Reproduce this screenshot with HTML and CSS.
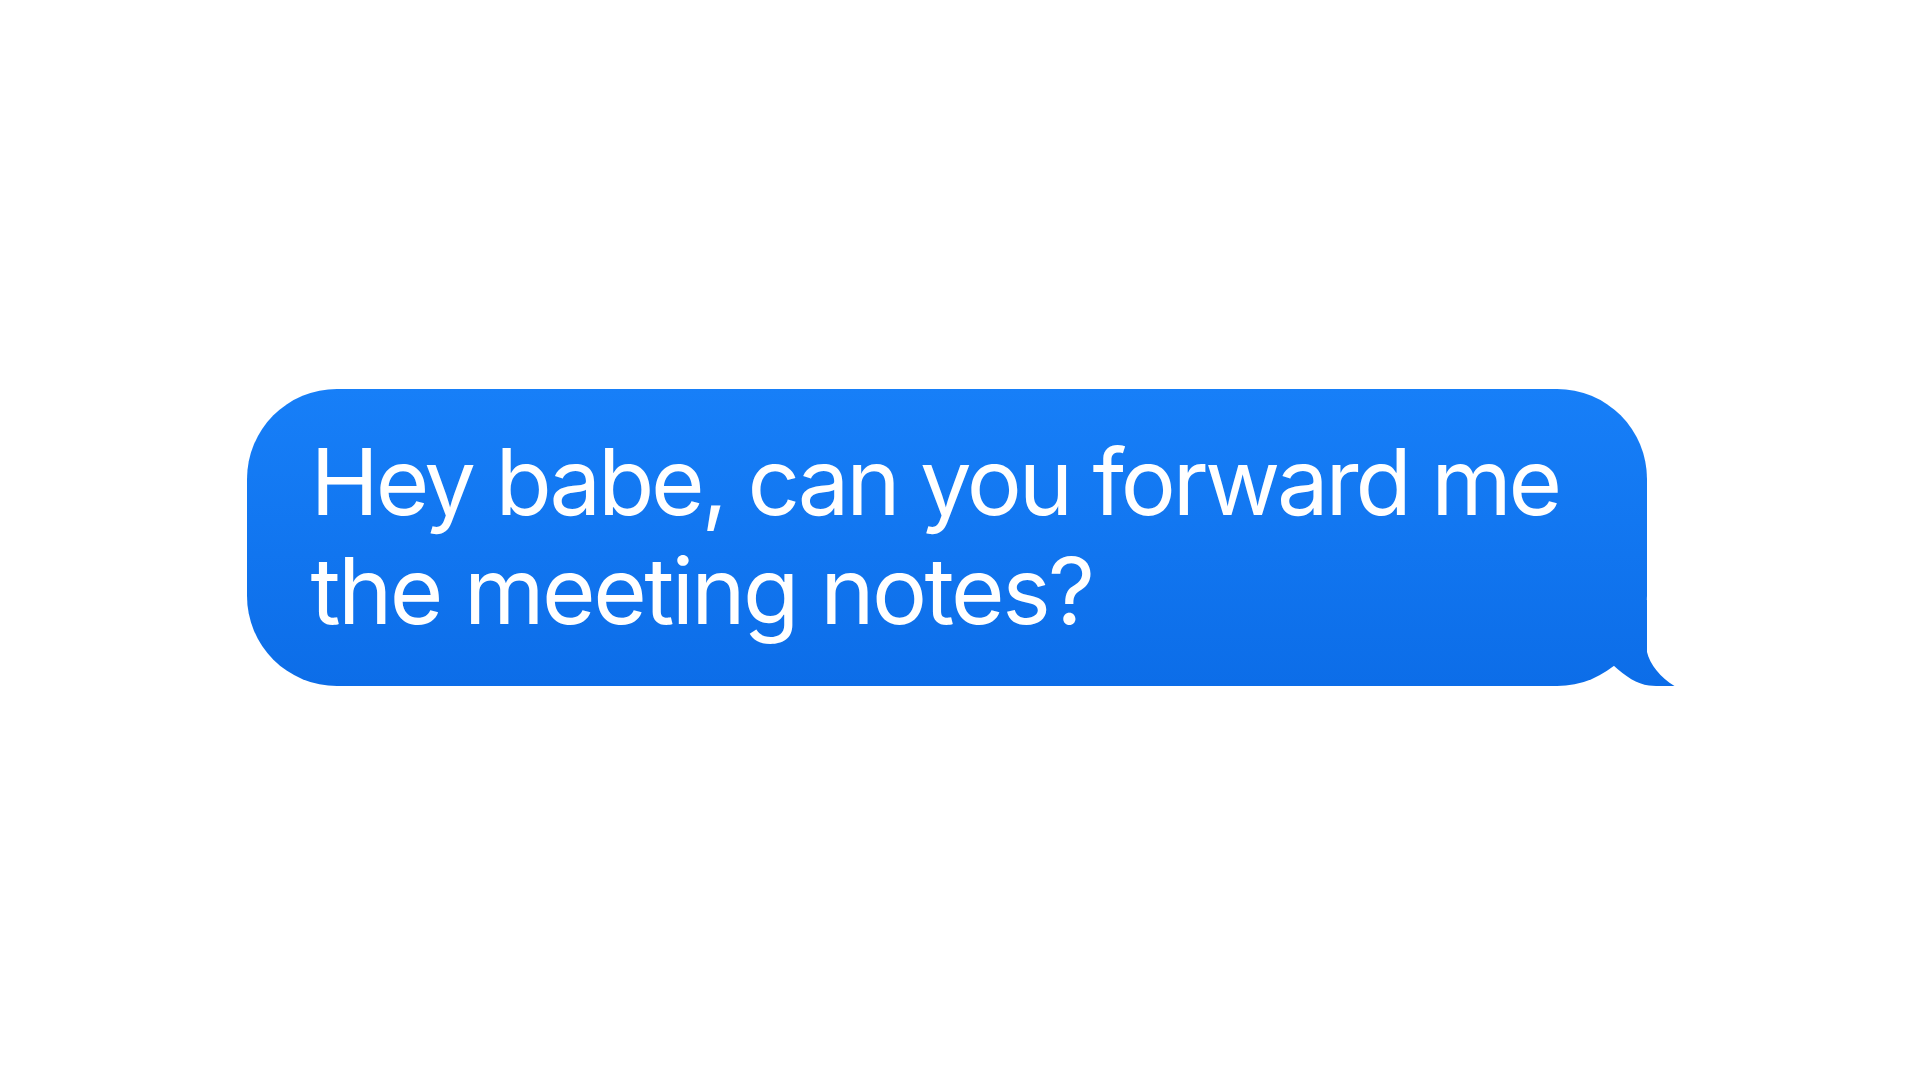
FILE: index.html
```html
<!DOCTYPE html>
<html lang="en">
<head>
<meta charset="utf-8">
<title>Message</title>
<link rel="stylesheet" href="styles.css">
</head>
<body>
<main class="stage">
  <div class="message">
    <p class="bubble"><span class="line line-first">Hey babe, can you forward me</span><span class="line line-second">the meeting notes?</span></p>
    <svg class="tail" viewBox="0 0 90 86" width="90" height="86" aria-hidden="true">
      <defs>
        <linearGradient id="tailFill" gradientUnits="userSpaceOnUse" x1="0" y1="-211" x2="0" y2="86">
          <stop offset="0" stop-color="#177ff8"/>
          <stop offset="1" stop-color="#0c6de8"/>
        </linearGradient>
      </defs>
      <path d="M22,0 L56,0 L56,52 C58.5,64 70,78 83.5,86 C75,86.3 66,86.3 58,85.5 C46,84 35,77 22,65 Z" fill="url(#tailFill)"/>
    </svg>
  </div>
</main>
</body>
</html>
```

FILE: styles.css
```css
html, body {
  margin: 0;
  padding: 0;
  background: #ffffff;
}

.stage {
  width: 100vw;
  height: 100vh;
  display: flex;
  align-items: center;
  justify-content: center;
}

.message {
  position: relative;
  margin-right: 27px;
  margin-bottom: 5px;
}

.bubble {
  margin: 0;
  box-sizing: border-box;
  width: 1400px;
  height: 297px;
  padding: 38px 40px 38px 64px;
  border-radius: 90px;
  background: linear-gradient(180deg, #177ff8 0%, #0c6de8 100%);
  color: #ffffff;
  font-family: Inter, "Liberation Sans", sans-serif;
  font-size: 92px;
  line-height: 109px;
  font-weight: 400;
  white-space: nowrap;
}

.line {
  display: block;
}

.line-first {
  letter-spacing: -3.2px;
}

.line-second {
  letter-spacing: -2.6px;
}

.tail {
  position: absolute;
  right: -34px;
  bottom: 0;
  display: block;
}
```
